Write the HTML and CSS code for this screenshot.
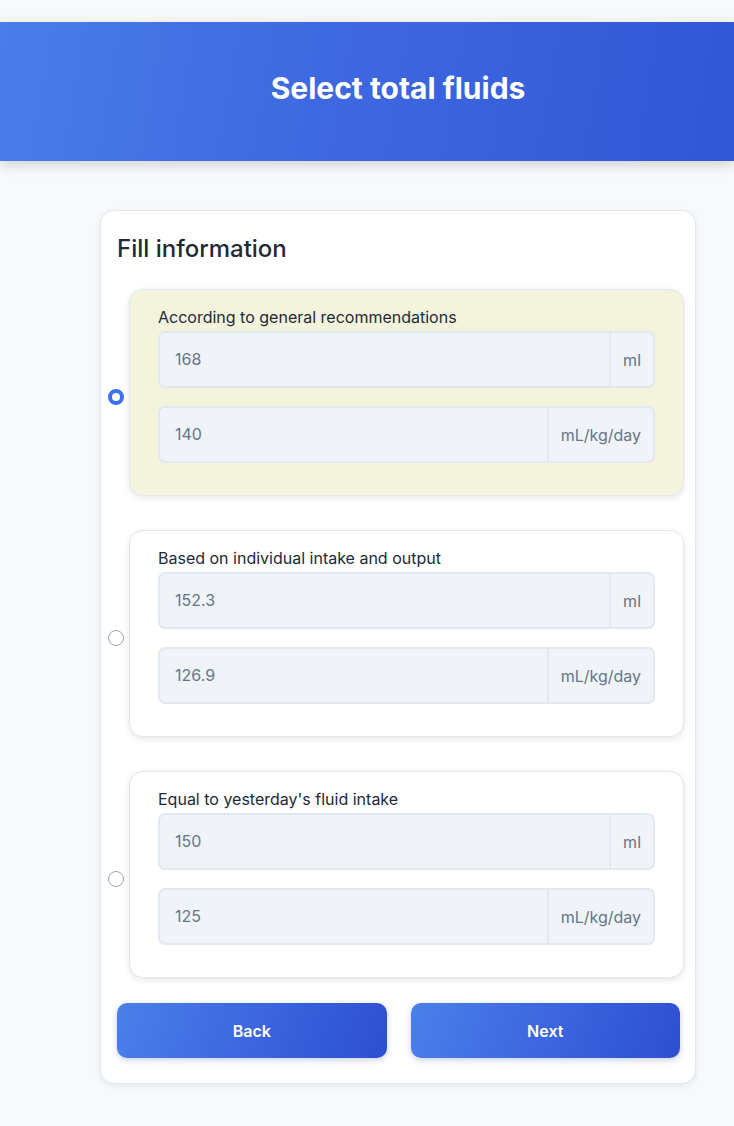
FILE: index.html
```html
<!DOCTYPE html>
<html lang="en">
<head>
<meta charset="utf-8">
<title>Select total fluids</title>
<link rel="stylesheet" href="styles.css">
</head>
<body>
<div class="top-gap"></div>
<header class="header">
  <h1 class="header-title">Select total fluids</h1>
</header>
<main class="main">
  <section class="card">
    <h2 class="card-title">Fill information</h2>

    <div class="option">
      <span class="radio radio-checked"></span>
      <div class="option-box option-box-active">
        <div class="option-label">According to general recommendations</div>
        <div class="input-group">
          <div class="input-value">168</div>
          <div class="input-addon">ml</div>
        </div>
        <div class="input-group">
          <div class="input-value">140</div>
          <div class="input-addon">mL/kg/day</div>
        </div>
      </div>
    </div>

    <div class="option">
      <span class="radio"></span>
      <div class="option-box">
        <div class="option-label">Based on individual intake and output</div>
        <div class="input-group">
          <div class="input-value">152.3</div>
          <div class="input-addon">ml</div>
        </div>
        <div class="input-group">
          <div class="input-value">126.9</div>
          <div class="input-addon">mL/kg/day</div>
        </div>
      </div>
    </div>

    <div class="option option-last">
      <span class="radio"></span>
      <div class="option-box">
        <div class="option-label">Equal to yesterday's fluid intake</div>
        <div class="input-group">
          <div class="input-value">150</div>
          <div class="input-addon">ml</div>
        </div>
        <div class="input-group">
          <div class="input-value">125</div>
          <div class="input-addon">mL/kg/day</div>
        </div>
      </div>
    </div>

    <div class="actions">
      <button class="btn" type="button">Back</button>
      <button class="btn" type="button">Next</button>
    </div>
  </section>
</main>
</body>
</html>
```
FILE: styles.css
```css
* { box-sizing: border-box; }

html, body {
  margin: 0;
  padding: 0;
  background: #f8f9fb;
  font-family: Inter, "Noto Sans", sans-serif;
}

.top-gap { height: 22px; }

.header {
  height: 139px;
  padding-left: 62px;
  padding-bottom: 7px;
  display: flex;
  align-items: center;
  justify-content: center;
  background: linear-gradient(100deg, #4a7de9 0%, #3e68e0 45%, #3057d5 100%);
  box-shadow: 0 4px 12px rgba(0, 0, 0, 0.16);
  position: relative;
}

.header-title {
  margin: 0;
  color: #ffffff;
  font-size: 30px;
  font-weight: 700;
  letter-spacing: 0;
}

.main {
  padding: 49px 0 40px 62px;
}

.card {
  width: 596px;
  margin: 0 auto;
  background: #ffffff;
  border: 1px solid #e2e8f0;
  border-radius: 14px;
  box-shadow: 0 2px 6px rgba(15, 23, 42, 0.08);
  padding: 16px 15px 25px 16px;
}

.card-title {
  margin: 7px 0 26px 0;
  font-size: 24px;
  font-weight: 500;
  color: #1f2937;
  line-height: normal;
}

.option {
  display: flex;
  align-items: center;
  gap: 5px;
  margin: 0 -4px 34px -9px;
}

.option-last { margin-bottom: 25px; }

.radio {
  flex: 0 0 auto;
  width: 16px;
  height: 16px;
  margin-top: 8px;
  border-radius: 50%;
  border: 1px solid #a3a3a3;
  background: #ffffff;
}

.radio-checked {
  border: 4.5px solid #3a72f0;
}

.option-box {
  flex: 1 1 auto;
  background: #ffffff;
  border: 1px solid #e2e8f0;
  border-radius: 14px;
  box-shadow: 0 2px 6px rgba(15, 23, 42, 0.1);
  padding: 16px 28px 16px 28px;
}

.option-box-active {
  background: #f4f4dd;
}

.option-label {
  font-size: 16px;
  line-height: 22px;
  color: #1e293b;
  margin-bottom: 3px;
}

.input-group {
  display: flex;
  height: 57px;
  border: 2px solid #e2e8f0;
  border-radius: 7px;
  background: #f0f4f9;
  margin-bottom: 18px;
  overflow: hidden;
}

.input-group:last-child { margin-bottom: 16px; }

.input-value {
  flex: 1 1 auto;
  display: flex;
  align-items: center;
  padding: 0 15px;
  font-size: 16px;
  color: #64748b;
  margin-top: -2px;
}

.input-addon {
  flex: 0 0 auto;
  display: flex;
  align-items: center;
  padding: 0 12px;
  border-left: 2px solid #e2e8f0;
  font-size: 16px;
  color: #64748b;
}

.actions {
  display: flex;
  gap: 24px;
}

.btn {
  flex: 1 1 0;
  height: 55px;
  border: none;
  border-radius: 10px;
  background: linear-gradient(110deg, #4a80ea 0%, #3d66df 50%, #2c4fd1 100%);
  color: #ffffff;
  font-family: Inter, "Noto Sans", sans-serif;
  font-size: 16px;
  font-weight: 600;
  box-shadow: 0 2px 6px rgba(37, 64, 180, 0.25);
  cursor: pointer;
}
```
